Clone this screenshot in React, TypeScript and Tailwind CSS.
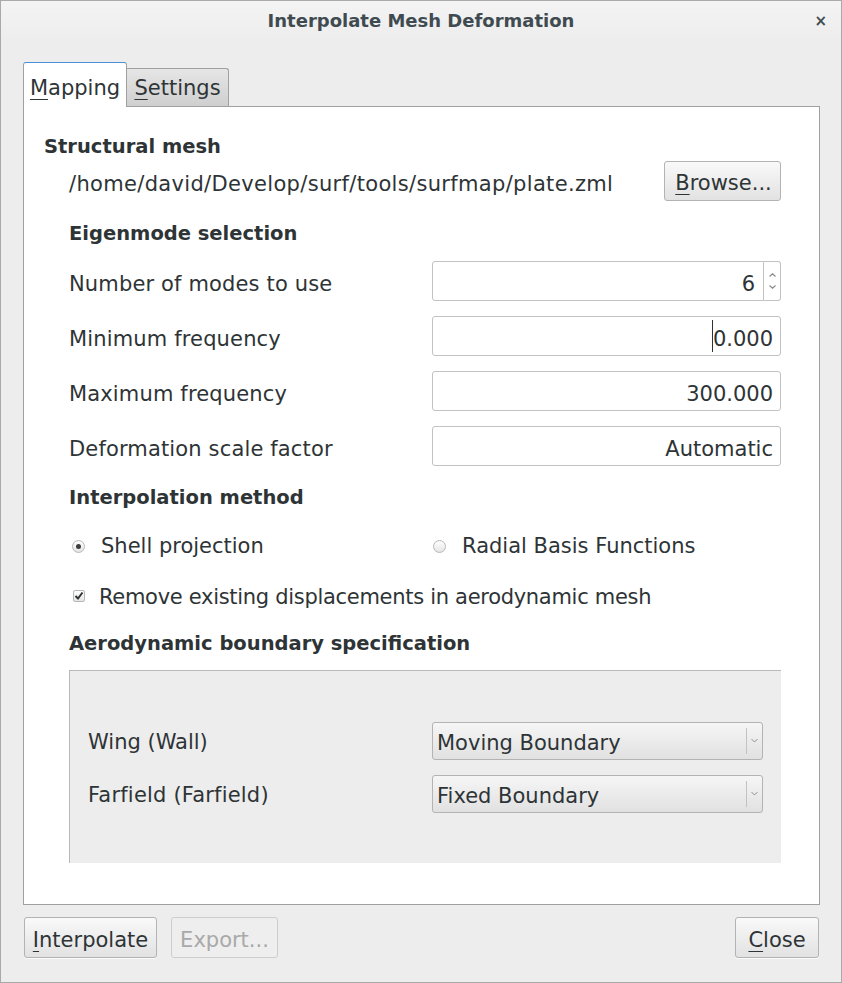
import React from "react";

function Mn({ children }: { children: React.ReactNode }) {
  return <span className="underline decoration-1 underline-offset-[4px]">{children}</span>;
}

function Button({
  children,
  className = "",
  disabled = false,
}: {
  children: React.ReactNode;
  className?: string;
  disabled?: boolean;
}) {
  return (
    <div
      className={
        "flex items-center justify-center rounded-[3px] border pt-[6px] " +
        (disabled
          ? "border-[#cdcdcd] bg-[#eeeeee] text-[#a9a9a9] "
          : "border-[#b3b3b3] bg-gradient-to-b from-[#f9f9f9] to-[#e2e2e2] shadow-[0_1px_0_rgba(255,255,255,0.8)] ") +
        className
      }
    >
      {children}
    </div>
  );
}

function Entry({ value, cursor = false }: { value: string; cursor?: boolean }) {
  return (
    <div className="h-[40px] flex items-center justify-end rounded-[3px] border border-[#c2c2c2] bg-white pr-[7px]">
      {cursor && <span className="h-[32px] border-l border-[#2e3436]" />}
      <span className="pt-[7px]">{value}</span>
    </div>
  );
}

function Spin({ value }: { value: string }) {
  return (
    <div className="h-[40px] flex">
      <div className="flex-1 flex items-center justify-end rounded-l-[3px] border border-[#c2c2c2] bg-white pr-[8px] pt-[7px]">
        {value}
      </div>
      <div className="w-[17px] flex flex-col items-center justify-center gap-[8px] rounded-r-[3px] border border-l-0 border-[#c2c2c2] bg-white">
        <svg width="7" height="4" viewBox="0 0 7 4">
          <path d="M0.5 3.5 L3.5 0.8 L6.5 3.5" stroke="#8a8a8a" strokeWidth="1.2" fill="none" />
        </svg>
        <svg width="7" height="4" viewBox="0 0 7 4">
          <path d="M0.5 0.5 L3.5 3.2 L6.5 0.5" stroke="#8a8a8a" strokeWidth="1.2" fill="none" />
        </svg>
      </div>
    </div>
  );
}

function Combo({ value }: { value: string }) {
  return (
    <div className="h-[38px] flex items-center rounded-[3px] border border-[#b3b3b3] bg-gradient-to-b from-[#f6f6f6] to-[#e1e1e1] pl-[4px]">
      <span className="flex-1 pt-[6px]">{value}</span>
      <span className="h-[26px] border-l border-[#c2c2c2]" />
      <svg className="mx-[4px]" width="7" height="5" viewBox="0 0 7 5">
        <path d="M0.5 1 L3.5 4 L6.5 1" stroke="#8f8f8f" strokeWidth="1" fill="none" />
      </svg>
    </div>
  );
}

function Radio({ checked }: { checked?: boolean }) {
  return (
    <span className="w-[13px] h-[13px] rounded-full border border-[#b8b8b8] bg-gradient-to-b from-white to-[#e4e4e4] flex items-center justify-center">
      {checked && <span className="w-[5px] h-[5px] rounded-full bg-[#3c3c3c]" />}
    </span>
  );
}

function Check() {
  return (
    <span className="w-[12px] h-[12px] rounded-[2px] border border-[#b8b8b8] bg-gradient-to-b from-white to-[#e4e4e4] flex items-center justify-center">
      <svg width="10" height="10" viewBox="0 0 10 10">
        <path d="M1.5 5 L4 7.5 L8.5 1.5" stroke="#2e3436" strokeWidth="2" fill="none" />
      </svg>
    </span>
  );
}

export default function App() {
  return (
    <div className="w-[842px] h-[983px] bg-[#ededed] border border-[#a9a9a9] flex flex-col font-['DejaVu_Sans',sans-serif] text-[21px] text-[#2e3436]">
      {/* Title bar */}
      <div className="h-[39px] relative flex items-center justify-center bg-gradient-to-b from-[#f4f4f4] to-[#ededed]">
        <span className="text-[18px] font-bold text-[#3f4b50]">Interpolate Mesh Deformation</span>
        <span className="absolute right-[14px] top-[9px] text-[15px] font-bold text-[#3f4b50]">×</span>
      </div>

      {/* Tabs */}
      <div className="h-[66px] flex items-end pl-[22px]">
        <div className="relative z-10 -mb-px h-[45px] w-[104px] flex items-center justify-center pt-[8px] bg-white border border-[#a0a0a0] border-b-0 border-t-[#4a90d9] rounded-t-[3px]">
          <span>
            <Mn>M</Mn>apping
          </span>
        </div>
        <div className="h-[38px] w-[102px] flex items-center justify-center pt-[2px] border border-l-0 border-b-0 border-[#a0a0a0] rounded-tr-[3px] bg-gradient-to-b from-[#e6e6e6] to-[#cfcfcf]">
          <span>
            <Mn>S</Mn>ettings
          </span>
        </div>
      </div>

      {/* Notebook page */}
      <div className="ml-[22px] w-[797px] h-[799px] bg-white border border-[#a0a0a0] pl-[20px] pr-[38px] pt-[24px] flex flex-col">
        <div className="h-[30px] flex items-center font-bold text-[19.5px] pt-[2px]">Structural mesh</div>
        <div className="h-[40px] flex items-center justify-between pl-[25px]">
          <span className="pt-[8px] tracking-[0.33px]">/home/david/Develop/surf/tools/surfmap/plate.zml</span>
          <Button className="w-[117px] h-[40px]">
            <span className="pl-[2px]">
              <Mn>B</Mn>rowse...
            </span>
          </Button>
        </div>

        <div className="mt-[17px] h-[30px] pl-[25px] flex items-center font-bold text-[19.5px] pt-[2px]">
          Eigenmode selection
        </div>

        <div className="mt-[13px] pl-[25px] grid grid-cols-[363px_1fr] gap-y-[15px]">
          <div className="h-[40px] flex items-center pt-[7px] tracking-[0.15px]">Number of modes to use</div>
          <Spin value="6" />
          <div className="h-[40px] flex items-center pt-[7px] tracking-[0.15px]">Minimum frequency</div>
          <Entry value="0.000" cursor />
          <div className="h-[40px] flex items-center pt-[7px] tracking-[0.15px]">Maximum frequency</div>
          <Entry value="300.000" />
          <div className="h-[40px] flex items-center pt-[7px] tracking-[0.15px]">Deformation scale factor</div>
          <Entry value="Automatic" />
        </div>

        <div className="mt-[16px] h-[30px] pl-[25px] flex items-center font-bold text-[19.5px] pt-[2px]">
          Interpolation method
        </div>

        <div className="mt-[19px] h-[30px] pl-[25px] grid grid-cols-[363px_1fr] items-center">
          <div className="flex items-center pl-[3px] gap-[16px]">
            <Radio checked />
            <span>Shell projection</span>
          </div>
          <div className="flex items-center pl-[1px] gap-[16px]">
            <Radio />
            <span>Radial Basis Functions</span>
          </div>
        </div>

        <div className="mt-[20px] h-[30px] pl-[29px] flex items-center gap-[14px]">
          <Check />
          <span className="pt-[4px] tracking-[-0.3px]">Remove existing displacements in aerodynamic mesh</span>
        </div>

        <div className="mt-[17px] h-[30px] pl-[25px] flex items-center font-bold text-[19.5px] pt-[2px]">
          Aerodynamic boundary specification
        </div>

        <div className="mt-[12px] ml-[25px] h-[193px] bg-[#ededed] border-t border-l border-[#b9b9b9] px-[18px] flex flex-col justify-center gap-[15px]">
          <div className="grid grid-cols-[344px_1fr] items-center">
            <span className="pt-[4px]">Wing (Wall)</span>
            <Combo value="Moving Boundary" />
          </div>
          <div className="grid grid-cols-[344px_1fr] items-center">
            <span className="pt-[4px] tracking-[0.2px]">Farfield (Farfield)</span>
            <Combo value="Fixed Boundary" />
          </div>
        </div>
      </div>

      {/* Action area */}
      <div className="mt-[12px] pl-[23px] pr-[22px] flex items-center">
        <Button className="w-[133px] h-[41px]">
          <span>
            <Mn>I</Mn>nterpolate
          </span>
        </Button>
        <Button disabled className="ml-[14px] w-[107px] h-[41px]">
          <span>Export...</span>
        </Button>
        <div className="flex-1" />
        <Button className="w-[84px] h-[41px]">
          <span>
            <Mn>C</Mn>lose
          </span>
        </Button>
      </div>
    </div>
  );
}
